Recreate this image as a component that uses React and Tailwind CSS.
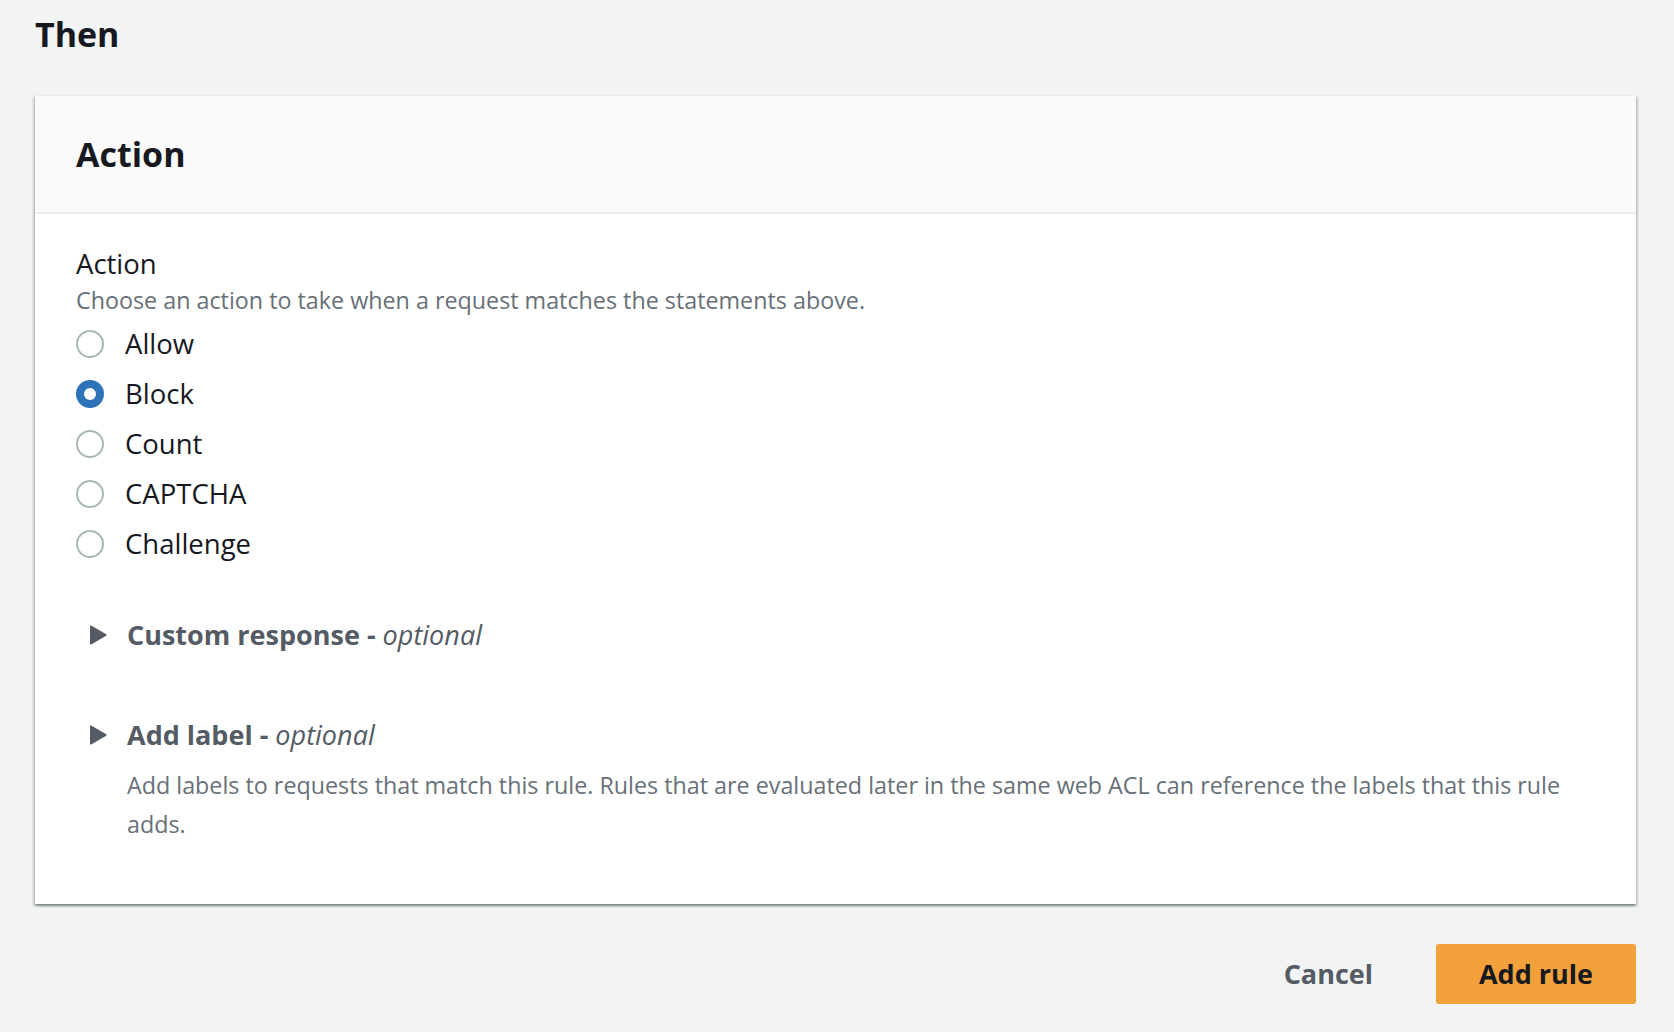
import React from "react";

const font = { fontFamily: '"Open Sans", "Noto Sans", sans-serif' };

function Radio({ checked, label }) {
  return (
    <div className="flex h-[50px] items-center gap-[21px]">
      {checked ? (
        <span className="box-border flex h-[28px] w-[28px] items-center justify-center rounded-full bg-[#2e72b8]">
          <span className="h-[12px] w-[12px] rounded-full bg-white" />
        </span>
      ) : (
        <span className="box-border h-[28px] w-[28px] rounded-full border-[2.5px] border-[#aab7b8] bg-white" />
      )}
      <span className="text-[27.5px] leading-[50px] text-[#16191f]">{label}</span>
    </div>
  );
}

function Caret() {
  return (
    <svg width="17" height="20" viewBox="0 0 17 20" className="shrink-0">
      <path d="M1.2 0.6 L16.2 9.2 Q17 10 16.2 10.8 L1.2 19.4 Q0 20 0 18.8 L0 1.2 Q0 0 1.2 0.6 Z" fill="#545b64" />
    </svg>
  );
}

function Expand({ title }) {
  return (
    <div className="flex h-[40px] items-center pl-[14px]">
      <Caret />
      <span className="ml-[20px] text-[27px] leading-[40px] text-[#545b64]">
        <span className="font-bold">{title} - </span>
        <span className="italic">optional</span>
      </span>
    </div>
  );
}

export default function App() {
  return (
    <div style={font} className="min-h-screen bg-[#f2f3f3] pl-[35px] pr-[38px] pt-[14px]">
      <h2 className="text-[34px] font-bold leading-[40px] text-[#16191f]">Then</h2>
      <div className="mt-[41px] border-t border-[#eaeded] bg-white shadow-[0_2px_2px_0_rgba(0,28,36,0.3),2px_2px_2px_0_rgba(0,28,36,0.15),-2px_2px_2px_0_rgba(0,28,36,0.15)]">
        <div className="flex h-[118px] items-center border-b-2 border-[#eaeded] bg-[#fafafa] pl-[41px]">
          <h2 className="text-[34px] font-bold leading-[40px] text-[#16191f]">Action</h2>
        </div>
        <div className="pl-[41px] pr-[41px] pt-[31px] pb-[60px]">
          <div className="text-[27.5px] leading-[38px] text-[#16191f]">Action</div>
          <div className="text-[23.3px] leading-[34px] text-[#687078]">
            Choose an action to take when a request matches the statements above.
          </div>
          <div className="mt-[2px] flex flex-col">
            <Radio label="Allow" />
            <Radio label="Block" checked />
            <Radio label="Count" />
            <Radio label="CAPTCHA" />
            <Radio label="Challenge" />
          </div>
          <div className="mt-[46px]">
            <Expand title="Custom response" />
          </div>
          <div className="mt-[60px]">
            <Expand title="Add label" />
            <p className="mt-[11px] pl-[51px] text-[23.3px] leading-[39px] text-[#687078]">
              Add labels to requests that match this rule. Rules that are evaluated later in the same web ACL can reference the labels that this rule adds.
            </p>
          </div>
        </div>
      </div>
      <div className="mt-[40px] flex justify-end gap-[21px]">
        <button className="h-[60px] rounded-[3px] px-[42px] text-[27px] font-bold text-[#545b64]">Cancel</button>
        <button className="h-[60px] w-[200px] rounded-[3px] bg-[#f2a13b] text-[27px] font-bold text-[#16191f]">Add rule</button>
      </div>
    </div>
  );
}
